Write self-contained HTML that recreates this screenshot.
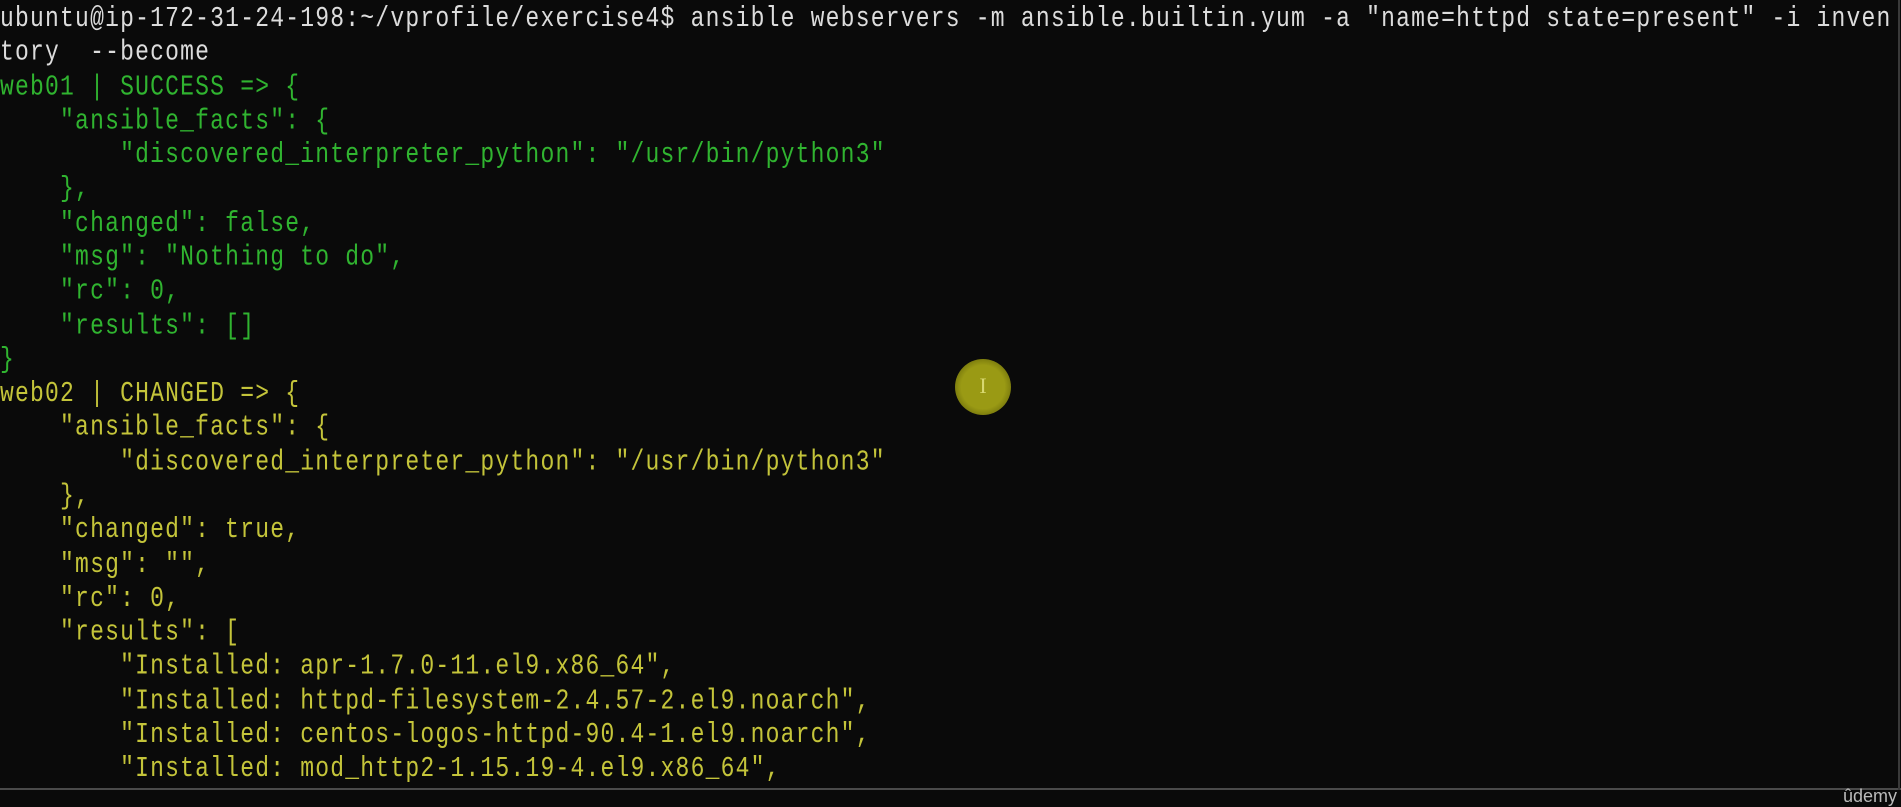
<!DOCTYPE html>
<html><head><meta charset="utf-8"><style>
html,body{margin:0;padding:0;}
body{width:1901px;height:802px;background:#0a0a0a;overflow:hidden;position:relative;}
pre{margin:0;position:absolute;left:0;top:2px;font-family:"Liberation Mono",monospace;font-size:23px;letter-spacing:1.21px;line-height:27.28px;color:#dcdcdc;white-space:pre;transform:scaleY(1.25);transform-origin:0 0;}
.g{color:#30b430}.y{color:#c4c43a}
.cur{position:absolute;left:955px;top:359px;width:56px;height:56px;border-radius:50%;background:radial-gradient(circle,#9a9a14 55%,#6e6e0a 80%,rgba(60,60,0,0) 100%);}
.cur span{position:absolute;left:0;width:56px;top:14px;text-align:center;color:#d8d870;font:22px "Liberation Serif",serif;}
.bl{position:absolute;left:0;top:788px;width:1901px;height:2px;background:#4a4a4a;}
.rl{position:absolute;left:1898px;top:0;width:2px;height:790px;background:#3a3a3a;}
.ud{position:absolute;left:1843px;top:786px;font:18px "Liberation Sans",sans-serif;color:#bbb;}
</style></head><body>
<pre>ubuntu@ip-172-31-24-198:~/vprofile/exercise4$ ansible webservers -m ansible.builtin.yum -a "name=httpd state=present" -i inven
tory  --become
<span class="g">web01 | SUCCESS =&gt; {
    "ansible_facts": {
        "discovered_interpreter_python": "/usr/bin/python3"
    },
    "changed": false,
    "msg": "Nothing to do",
    "rc": 0,
    "results": []
}</span>
<span class="y">web02 | CHANGED =&gt; {
    "ansible_facts": {
        "discovered_interpreter_python": "/usr/bin/python3"
    },
    "changed": true,
    "msg": "",
    "rc": 0,
    "results": [
        "Installed: apr-1.7.0-11.el9.x86_64",
        "Installed: httpd-filesystem-2.4.57-2.el9.noarch",
        "Installed: centos-logos-httpd-90.4-1.el9.noarch",
        "Installed: mod_http2-1.15.19-4.el9.x86_64",</span></pre>
<div class="cur"><span>I</span></div>
<div class="bl"></div><div class="rl"></div>
<div class="ud">ûdemy</div>
</body></html>
